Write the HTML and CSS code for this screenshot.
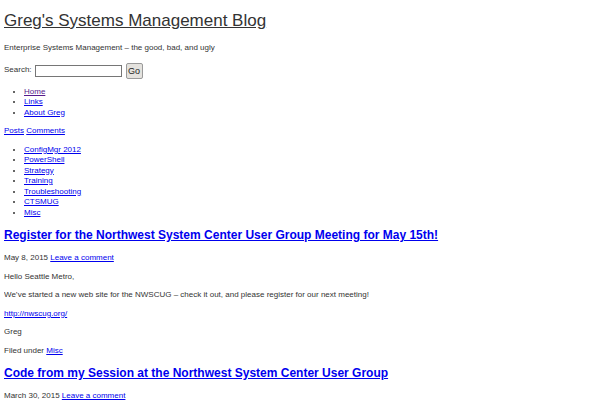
FILE: index.html
```html
<!DOCTYPE html>
<html>
<head>
<meta charset="utf-8">
<link rel="stylesheet" href="styles.css">
</head>
<body>
<div class="header">
  <h1 class="site-title"><a href="#" class="title-link">Greg's Systems Management Blog</a></h1>
  <p class="tagline">Enterprise Systems Management – the good, bad, and ugly</p>
  <form class="search">
    <label>Search:</label>
    <input type="text" class="search-input">
    <button type="button" class="go">Go</button>
  </form>
  <ul class="list">
    <li><a href="#" class="visited">Home</a></li>
    <li><a href="#">Links</a></li>
    <li><a href="#">About Greg</a></li>
  </ul>
  <p class="feeds"><a href="#">Posts</a> <a href="#">Comments</a></p>
  <ul class="list">
    <li><a href="#">ConfigMgr 2012</a></li>
    <li><a href="#">PowerShell</a></li>
    <li><a href="#">Strategy</a></li>
    <li><a href="#">Training</a></li>
    <li><a href="#">Troubleshooting</a></li>
    <li><a href="#">CTSMUG</a></li>
    <li><a href="#">Misc</a></li>
  </ul>
</div>
<div class="post">
  <h2 class="post-title"><a href="#">Register for the Northwest System Center User Group Meeting for May 15th!</a></h2>
  <p>May 8, 2015 <a href="#">Leave a comment</a></p>
  <p>Hello Seattle Metro,</p>
  <p>We’ve started a new web site for the NWSCUG – check it out, and please register for our next meeting!</p>
  <p><a href="#">http://nwscug.org/</a></p>
  <p>Greg</p>
  <p>Filed under <a href="#">Misc</a></p>
</div>
<div class="post">
  <h2 class="post-title"><a href="#">Code from my Session at the Northwest System Center User Group</a></h2>
  <p>March 30, 2015 <a href="#">Leave a comment</a></p>
</div>
</body>
</html>
```
FILE: styles.css
```css
body {
  margin: 4px;
  font-family: "Liberation Sans", Arial, sans-serif;
  font-size: 8px;
  line-height: 10.5px;
  color: #333;
  background: #fff;
}
a { color: #0000ee; }
a.visited { color: #551a8b; }
.site-title {
  font-size: 17px;
  line-height: 20px;
  font-weight: normal;
  margin: 7px 0 0;
}
.title-link { color: #333; }
.tagline { margin: 12px 0 9px; }
.search { display: flex; align-items: center; height: 16px; margin: 0; }
.search label { margin-right: 3px; }
.search-input {
  box-sizing: border-box;
  width: 87px;
  height: 12px;
  border: 1px solid #767676;
  padding: 0 1px;
  font-size: 8px;
  margin: 0 4px 0 0;
}
.go {
  box-sizing: border-box;
  width: 17px;
  height: 16px;
  font-family: "Liberation Sans", Arial, sans-serif;
  font-size: 9px;
  padding: 0;
  background: #e4e2de;
  border: 1px solid #9a9a9a;
  border-radius: 2px;
  color: #222;
}
.list { margin: 8px 0; padding-left: 20px; }
.feeds { margin: 8px 0; }
.post-title {
  font-size: 12px;
  line-height: 16px;
  font-weight: bold;
  margin: 9px 0 10px;
}
.post p { margin: 8px 0; }
```
